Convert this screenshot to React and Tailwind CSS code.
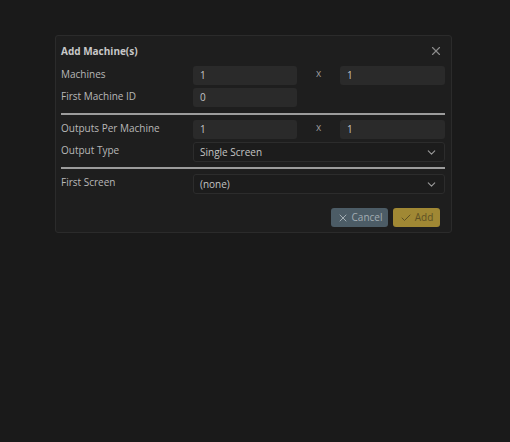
import { X, Check, ChevronDown } from "lucide-react";

function Field({ value }) {
    return (
        <div className="h-[19px] rounded-[3px] bg-[#2a2a2a] px-[7px] flex items-center text-[10px] text-[#c4c4c4]">
            {value}
        </div>
    );
}

function Select({ value, wide }) {
    return (
        <div
            className={
                (wide ? "col-span-3 " : "") +
                "h-[20px] rounded-[3px] bg-[#1c1c1c] border border-[#2c2c2c] pl-[6px] pr-[6px] flex items-center justify-between text-[10px] text-[#c4c4c4]"
            }
        >
            <span>{value}</span>
            <ChevronDown size={13} strokeWidth={2} className="text-[#9a9a9a]" />
        </div>
    );
}

function Label({ children }) {
    return <div className="text-[10px] text-[#b8b8b8] leading-[14px] self-start pt-[1px]">{children}</div>;
}

export default function App() {
    return (
        <div
            className="w-[510px] h-[442px] bg-[#1a1a1a] pt-[35px] pl-[55px]"
            style={{ fontFamily: '"Open Sans", "Noto Sans", sans-serif' }}
        >
            <div className="w-[397px] h-[198px] bg-[#1e1e1e] border border-[#2b2b2b] rounded-[3px] px-[5px] pt-[7px]">
                {/* header */}
                <div className="flex items-center justify-between h-[16px]">
                    <span className="text-[10px] font-bold text-[#c8c8c8]">Add Machine(s)</span>
                    <X size={14} strokeWidth={2} className="text-[#8a8a8a] mr-[3px]" />
                </div>

                <div className="grid grid-cols-[132px_104px_43px_105px] gap-y-[3px] mt-[7px] items-center">
                    <Label>Machines</Label>
                    <Field value="1" />
                    <div className="text-[10px] text-[#9a9a9a] text-center self-start leading-[14px]">x</div>
                    <Field value="1" />

                    <Label>First Machine ID</Label>
                    <Field value="0" />
                    <div />
                    <div />
                </div>

                <div className="h-[2px] bg-[#9c9c9c] mt-[6px] mr-[1px]" />

                <div className="grid grid-cols-[132px_104px_43px_105px] gap-y-[3px] mt-[5px] items-center">
                    <Label>Outputs Per Machine</Label>
                    <Field value="1" />
                    <div className="text-[10px] text-[#9a9a9a] text-center self-start leading-[14px]">x</div>
                    <Field value="1" />

                    <Label>Output Type</Label>
                    <Select value="Single Screen" wide />
                </div>

                <div className="h-[2px] bg-[#9c9c9c] mt-[5px] mr-[1px]" />

                <div className="grid grid-cols-[132px_252px] mt-[5px] items-center">
                    <Label>First Screen</Label>
                    <Select value="(none)" />
                </div>

                <div className="flex justify-end gap-[5px] mt-[14px] pr-[6px]">
                    <button className="h-[19px] w-[57px] rounded-[3px] bg-[#4c5c66] flex items-center justify-center gap-[3px] text-[10px] text-[#a3adb3]">
                        <X size={12} strokeWidth={2} />
                        Cancel
                    </button>
                    <button className="h-[19px] w-[47px] rounded-[3px] bg-[#a08834] flex items-center justify-center gap-[3px] text-[10px] text-[#5e5124]">
                        <Check size={12} strokeWidth={2} />
                        Add
                    </button>
                </div>
            </div>
        </div>
    );
}
